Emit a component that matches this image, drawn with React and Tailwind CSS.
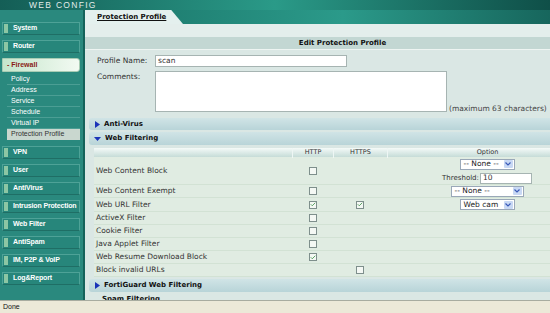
import { Check } from "lucide-react";

const topMenu = ["System", "Router"];
const subMenu = ["Policy", "Address", "Service", "Schedule", "Virtual IP"];
const lowerMenu = ["VPN", "User", "AntiVirus", "Intrusion Protection", "Web Filter", "AntiSpam", "IM, P2P & VoIP", "Log&Report"];

function MenuItem({ label }) {
  return (
    <div className="h-[13px] mb-[5px] flex items-center border border-[#4ea297] border-b-[#1f6e65] bg-[#27867b]">
      <div className="w-[4px] h-[9px] ml-[1px] shrink-0 bg-[#8cc6a4]" />
      <span className="ml-[5px] whitespace-nowrap tracking-[-0.15px] text-[7px] font-bold text-white font-['Liberation_Sans',sans-serif]">{label}</span>
    </div>
  );
}

function Box({ checked }) {
  return (
    <div className="w-[8px] h-[8px] border border-[#7e8f8c] bg-[#f4f8f4] flex items-center justify-center">
      {checked && <Check size={7} strokeWidth={3} className="text-[#2e8a3a]" />}
    </div>
  );
}

function Select({ label, w }) {
  return (
    <div className={`${w} h-[11px] bg-white border border-[#9aa8b8] flex items-center justify-between pl-[3px] pr-[1px]`}>
      <span className="text-[7.5px] leading-none text-[#222]">{label}</span>
      <div className="w-[9px] h-[8px] bg-[#c8d8f4] rounded-[1px] flex items-center justify-center">
        <svg width="6" height="4" viewBox="0 0 6 4"><path d="M0.5 0.5 L3 3 L5.5 0.5" stroke="#3a5ab8" strokeWidth="1.2" fill="none" /></svg>
      </div>
    </div>
  );
}

function Section({ label, open, className = "" }) {
  return (
    <div className={`ml-[4px] flex items-center bg-gradient-to-b from-[#d0e4e6] to-[#b8d4d8] rounded-l-[3px] ${className}`}>
      {open ? (
        <svg className="ml-[5px]" width="7" height="5" viewBox="0 0 7 5"><path d="M0 1 L7 1 L3.5 5 Z" fill="#1a33b8" /></svg>
      ) : (
        <svg className="ml-[6px]" width="5" height="7" viewBox="0 0 5 7"><path d="M0 0 L5 3.5 L0 7 Z" fill="#1a33b8" /></svg>
      )}
      <span className="ml-[4px] text-[7px] font-bold text-[#111]">{label}</span>
    </div>
  );
}

const rows = [
  { label: "Web Content Exempt", http: false, https: null, opt: <Select label="-- None --" w="w-[73px]" /> },
  { label: "Web URL Filter", http: true, https: true, opt: <Select label="Web cam" w="w-[55px]" />, h: "h-[14px]" },
  { label: "ActiveX Filter", http: false, https: null },
  { label: "Cookie Filter", http: false, https: null },
  { label: "Java Applet Filter", http: false, https: null },
  { label: "Web Resume Download Block", http: true, https: null },
  { label: "Block invalid URLs", http: null, https: false },
];

export default function App() {
  return (
    <div className="w-[550px] h-[313px] overflow-hidden flex flex-col bg-[#2a897e] font-['DejaVu_Sans',sans-serif] text-[#333]">
      <div className="h-[10px] flex items-center bg-gradient-to-r from-[#145e56] via-[#2a9a88] to-[#0f4f48]">
        <span className="ml-[29px] text-[8.5px] leading-none tracking-[1.3px] text-[#e2ecea] font-['Liberation_Sans',sans-serif]">WEB CONFIG</span>
      </div>
      <div className="flex flex-1 min-h-0">
        <aside className="w-[83px] shrink-0 pt-[12px] pl-[2px] pr-[3px]">
          {topMenu.map((m) => <MenuItem key={m} label={m} />)}
          <div className="h-[14px] flex items-center bg-gradient-to-r from-[#c6e6cc] to-[#f2faf2] rounded-r-[3px] border border-[#a8ccb4]">
            <span className="ml-[4px] text-[7px] font-bold text-[#8a1c14] font-['Liberation_Sans',sans-serif]">- Firewall</span>
          </div>
          <div className="pl-[5px] mt-[2px] mb-[6px]">
            {subMenu.map((s) => (
              <div key={s} className="h-[11px] flex items-center border-b border-[#4b9e94]">
                <span className="ml-[4px] text-[7px] text-white font-['Liberation_Sans',sans-serif]">{s}</span>
              </div>
            ))}
            <div className="h-[11px] flex items-center bg-[#c9d7cf]">
              <span className="ml-[4px] text-[7px] text-[#333] font-['Liberation_Sans',sans-serif]">Protection Profile</span>
            </div>
          </div>
          {lowerMenu.map((m) => <MenuItem key={m} label={m} />)}
        </aside>
        <main className="flex-1 min-w-0 border-l-2 border-[#15625a] overflow-hidden bg-[#dae7e4]">
          <div className="w-[515px]">
            <div className="h-[14px] flex bg-gradient-to-r from-[#1a7468] via-[#2b9a8a] to-[#125a52]">
              <div className="w-[98px] h-full bg-[#e4f0ee] flex items-center [clip-path:polygon(0_0,88%_0,100%_100%,0_100%)]">
                <span className="ml-[12px] text-[7px] font-bold underline text-[#111]">Protection Profile</span>
              </div>
            </div>
            <div className="h-[13px] bg-[#e4eeec]" />
            <div className="h-[13px] bg-[#c3d7d3] border-b border-[#eef4f2] flex items-center justify-center">
              <span className="text-[7px] font-bold text-[#111]">Edit Protection Profile</span>
            </div>
            <div className="pt-[5px] pl-[12px] text-[7.5px]">
              <div className="flex items-center">
                <span className="w-[58px]">Profile Name:</span>
                <div className="w-[192px] h-[12px] bg-white border border-[#a6b4b2] flex items-center pl-[2px]">scan</div>
              </div>
              <div className="flex mt-[4px]">
                <span className="w-[58px]">Comments:</span>
                <div className="w-[292px] h-[41px] bg-white border border-[#a6b4b2]" />
                <span className="self-end ml-[2px] leading-none text-[#444]">(maximum 63 characters)</span>
              </div>
            </div>
            <Section label="Anti-Virus" className="mt-[6px] h-[12px]" />
            <Section label="Web Filtering" open className="mt-[2px] h-[13px]" />
            <div className="ml-[9px] mt-[3px] bg-[#e0ece2]">
              <div className="h-[9px] grid grid-cols-[198px_41px_54px_200px] bg-gradient-to-b from-[#f4faf8] to-[#c6dcd8] text-[6.5px] text-[#333]">
                <div />
                <div className="flex items-center justify-center border-l border-[#eef6f4]">HTTP</div>
                <div className="flex items-center justify-center border-l border-[#eef6f4]">HTTPS</div>
                <div className="flex items-center justify-center border-l border-[#eef6f4]">Option</div>
              </div>
              <div className="h-[27px] mt-[1px] grid grid-cols-[198px_41px_54px_200px] border-b border-[#d2e2d4] text-[7.5px]">
                <div className="flex items-center pl-[2px]">Web Content Block</div>
                <div className="flex items-center justify-center"><Box /></div>
                <div />
                <div className="flex flex-col items-center justify-center gap-[3px]">
                  <Select label="-- None --" w="w-[55px]" />
                  <div className="flex items-center gap-[1px]">
                    <span className="text-[7px]">Threshold:</span>
                    <div className="w-[52px] h-[11px] bg-white border border-[#a6b4b2] flex items-center pl-[2px]">10</div>
                  </div>
                </div>
              </div>
              {rows.map((r) => (
                <div key={r.label} className={`${r.h || "h-[13px]"} grid grid-cols-[198px_41px_54px_200px] border-b border-[#d2e2d4] text-[7.5px]`}>
                  <div className="flex items-center pl-[2px]">{r.label}</div>
                  <div className="flex items-center justify-center">{r.http !== null && <Box checked={r.http} />}</div>
                  <div className="flex items-center justify-center">{r.https !== null && <Box checked={r.https} />}</div>
                  <div className="flex items-center justify-center">{r.opt}</div>
                </div>
              ))}
            </div>
            <Section label="FortiGuard Web Filtering" className="mt-[2px] h-[13px]" />
            <div className="mt-[2px] ml-[17px] text-[7px] font-bold text-[#111]">Spam Filtering</div>
          </div>
        </main>
      </div>
      <div className="h-[13px] bg-[#ece9d8] border-t border-[#a8aca0] flex items-center">
        <span className="ml-[3px] text-[7px] text-[#111] font-['Liberation_Sans',sans-serif]">Done</span>
      </div>
    </div>
  );
}
